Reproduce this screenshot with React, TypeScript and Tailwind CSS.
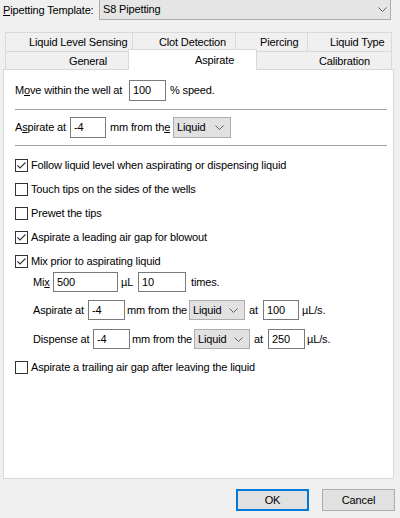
import React from "react";

const Chevron = () => (
  <svg width="9" height="5" viewBox="0 0 9 5" className="shrink-0">
    <path d="M0.5 0.5 L4.5 4.5 L8.5 0.5" fill="none" stroke="#606060" strokeWidth="1" />
  </svg>
);

function Check({ checked }: { checked: boolean }) {
  return (
    <div className="w-[13px] h-[13px] border border-[#333333] bg-white flex items-center justify-center shrink-0">
      {checked && (
        <svg width="11" height="11" viewBox="0 0 11 11">
          <path d="M1.5 5.5 L4 8 L9.5 2.5" fill="none" stroke="#333333" strokeWidth="1.1" />
        </svg>
      )}
    </div>
  );
}

function Field({ value, className }: { value: string; className: string }) {
  return (
    <div className={"border border-[#7a7a7a] bg-white flex items-center pl-[3px] shrink-0 " + className}>
      {value}
    </div>
  );
}

function Select({ className }: { className: string }) {
  return (
    <div className={"border border-[#adadad] bg-[#e1e1e1] flex items-center justify-between pl-[3px] pr-[6px] shrink-0 " + className}>
      <span>Liquid</span>
      <Chevron />
    </div>
  );
}

function CheckRow({ checked, label }: { checked: boolean; label: string }) {
  return (
    <div className="flex items-center h-[13px] gap-[3px] whitespace-nowrap">
      <Check checked={checked} />
      <span>{label}</span>
    </div>
  );
}

export default function App() {
  return (
    <div className="w-[400px] h-[518px] bg-[#f0f0f0] text-black text-[11px] tracking-[-0.15px] leading-none font-['Liberation_Sans',Arial,sans-serif] flex flex-col overflow-hidden">
      {/* Template row */}
      <div className="flex items-center h-[20px]">
        <div className="w-[99px] pl-[3px] whitespace-nowrap">
          <u className="underline-offset-[1px]">P</u>ipetting Template:
        </div>
        <div className="w-[292px] h-[21px] -mt-[1px] border border-[#adadad] bg-[#e5e5e5] flex items-center justify-between pl-[3px] pr-[3px]">
          <span>S8 Pipetting</span>
          <Chevron />
        </div>
      </div>

      {/* Tabs */}
      <div className="mt-[12px] ml-[5px] w-[387px] flex flex-col">
        <div className="flex h-[19px]">
          <div className="w-[127px] border-t border-l border-[#d9d9d9] flex items-center pl-[23px] pt-[1px] whitespace-nowrap">Liquid Level Sensing</div>
          <div className="w-[103px] border-t border-l border-[#d9d9d9] flex items-center pl-[26px] pt-[1px] whitespace-nowrap">Clot Detection</div>
          <div className="w-[72px] border-t border-l border-[#d9d9d9] flex items-center pl-[24px] pt-[1px] whitespace-nowrap">Piercing</div>
          <div className="w-[85px] border-t border-l border-r border-[#d9d9d9] flex items-center pl-[22px] pt-[1px] whitespace-nowrap">Liquid Type</div>
        </div>
        <div className="flex h-[18px]">
          <div className="w-[123px] border-t border-l border-[#d9d9d9] flex items-center pl-[63px] pt-[2px] whitespace-nowrap">General</div>
          <div className="w-[129px] relative">
            <div className="absolute left-0 right-0 -top-[2px] -bottom-[1px] bg-white border-t border-l border-r border-[#d9d9d9] z-10 flex items-start pt-[5px] pl-[66px] whitespace-nowrap">
              Aspirate
            </div>
          </div>
          <div className="w-[135px] border-t border-r border-[#d9d9d9] flex items-center pl-[62px] pt-[2px] whitespace-nowrap">Calibration</div>
        </div>
      </div>

      {/* Panel */}
      <div className="ml-[3px] w-[391px] h-[410px] border border-[#d9d9d9] bg-white pl-[11px] flex flex-col">
        <div className="mt-[10px] flex items-center h-[21px] whitespace-nowrap">
          <div className="w-[114px]">
            M<u className="underline-offset-[1px]">o</u>ve within the well at
          </div>
          <Field value="100" className="w-[37px] h-[21px]" />
          <span className="ml-[4px]">% speed.</span>
        </div>
        <div className="mt-[8px] w-[372px] h-px bg-[#a0a0a0]" />
        <div className="mt-[7px] flex items-center h-[21px] whitespace-nowrap">
          <div className="w-[55px]">
            A<u className="underline-offset-[1px]">s</u>pirate at
          </div>
          <Field value="-4" className="w-[36px] h-[21px]" />
          <div className="ml-[4px] w-[63px]">
            mm from th<u className="underline-offset-[1px]">e</u>
          </div>
          <Select className="w-[58px] h-[21px]" />
        </div>
        <div className="mt-[7px] w-[372px] h-px bg-[#a0a0a0]" />

        <div className="mt-[13px] flex flex-col gap-[11px]">
          <CheckRow checked label="Follow liquid level when aspirating or dispensing liquid" />
          <CheckRow checked={false} label="Touch tips on the sides of the wells" />
          <CheckRow checked={false} label="Prewet the tips" />
          <CheckRow checked label="Aspirate a leading air gap for blowout" />
          <CheckRow checked label="Mix prior to aspirating liquid" />
        </div>

        <div className="pl-[18px] flex flex-col">
          <div className="mt-[4px] flex items-center h-[20px] whitespace-nowrap">
            <div className="w-[20px]">
              Mi<u className="underline-offset-[1px]">x</u>
            </div>
            <Field value="500" className="w-[65px] h-[20px]" />
            <div className="ml-[3px] w-[17px]">µL</div>
            <Field value="10" className="w-[48px] h-[20px]" />
            <span className="ml-[5px]">times.</span>
          </div>
          <div className="mt-[8px] flex items-center h-[20px] whitespace-nowrap">
            <div className="w-[55px]">Aspirate at</div>
            <Field value="-4" className="w-[37px] h-[20px]" />
            <div className="ml-[2px] w-[62px]">mm from the</div>
            <Select className="w-[56px] h-[20px]" />
            <div className="ml-[4px] w-[14px]">at</div>
            <Field value="100" className="w-[36px] h-[20px]" />
            <span className="ml-[3px]">µL/s.</span>
          </div>
          <div className="mt-[9px] flex items-center h-[20px] whitespace-nowrap">
            <div className="w-[60px]">Dispense at</div>
            <Field value="-4" className="w-[37px] h-[20px]" />
            <div className="ml-[2px] w-[62px]">mm from the</div>
            <Select className="w-[56px] h-[20px]" />
            <div className="ml-[4px] w-[14px]">at</div>
            <Field value="250" className="w-[37px] h-[20px]" />
            <span className="ml-[2px]">µL/s.</span>
          </div>
        </div>

        <div className="mt-[12px]">
          <CheckRow checked={false} label="Aspirate a trailing air gap after leaving the liquid" />
        </div>
      </div>

      {/* Buttons */}
      <div className="mt-[10px] flex justify-end pr-[5px] gap-[13px]">
        <button className="w-[73px] h-[22px] border-2 border-[#0078d7] bg-[#e1e1e1] flex items-center justify-center">OK</button>
        <button className="w-[73px] h-[22px] border border-[#adadad] bg-[#e1e1e1] flex items-center justify-center">Cancel</button>
      </div>
    </div>
  );
}
